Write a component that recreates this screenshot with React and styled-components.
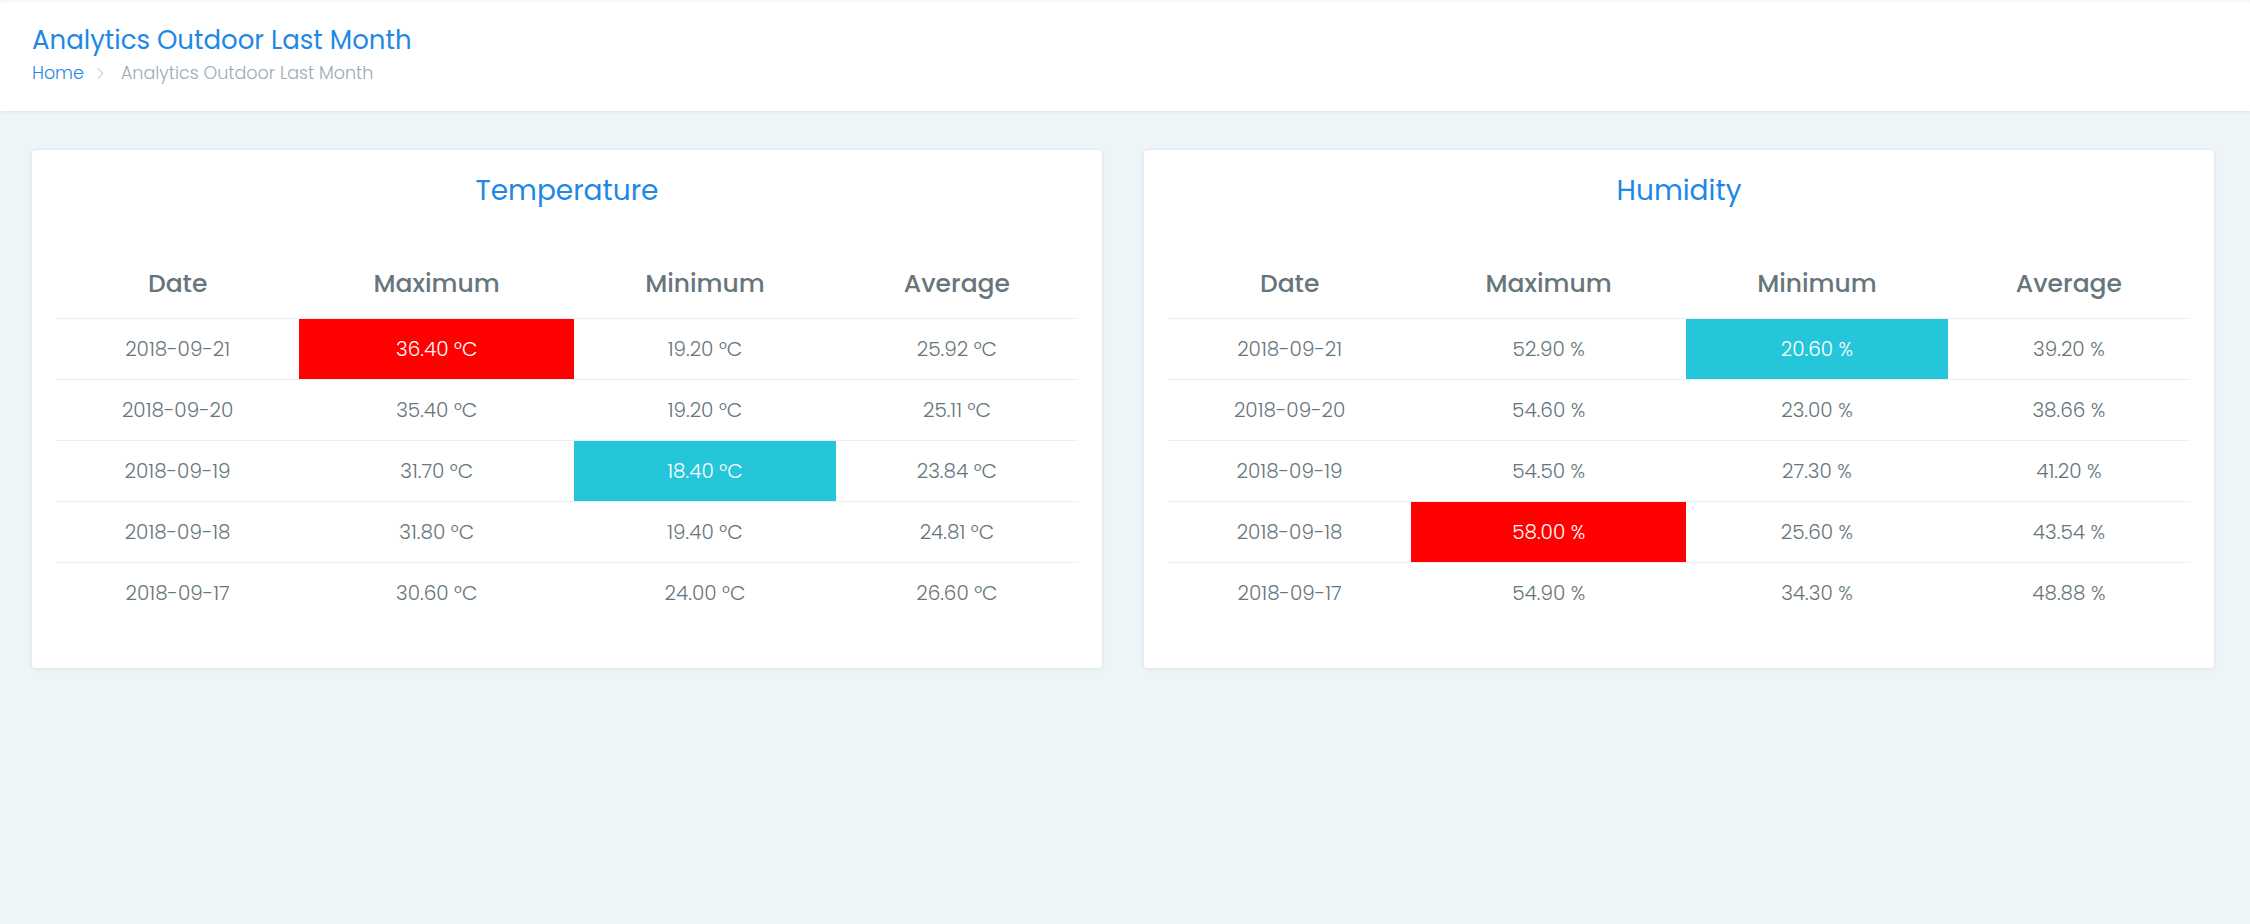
import React from 'react'
import styled, { createGlobalStyle } from 'styled-components'
import { ChevronRight } from 'lucide-react'

const GlobalStyle = createGlobalStyle`
  html, body {
    margin: 0;
    padding: 0;
  }
  body {
    background: #eef5f9;
    font-family: "Poppins", "Inter", "Noto Sans", sans-serif;
    color: #67757c;
    min-height: 100vh;
  }
`

const temperature = [
  { date: '2018-09-21', max: 36.4, min: 19.2, avg: 25.92 },
  { date: '2018-09-20', max: 35.4, min: 19.2, avg: 25.11 },
  { date: '2018-09-19', max: 31.7, min: 18.4, avg: 23.84 },
  { date: '2018-09-18', max: 31.8, min: 19.4, avg: 24.81 },
  { date: '2018-09-17', max: 30.6, min: 24.0, avg: 26.6 },
]

const humidity = [
  { date: '2018-09-21', max: 52.9, min: 20.6, avg: 39.2 },
  { date: '2018-09-20', max: 54.6, min: 23.0, avg: 38.66 },
  { date: '2018-09-19', max: 54.5, min: 27.3, avg: 41.2 },
  { date: '2018-09-18', max: 58.0, min: 25.6, avg: 43.54 },
  { date: '2018-09-17', max: 54.9, min: 34.3, avg: 48.88 },
]

function StatsCard({ title, rows, unit }) {
  const top = Math.max(...rows.map(r => r.max))
  const bottom = Math.min(...rows.map(r => r.min))
  const fmt = v => `${v.toFixed(2)} ${unit}`

  return (
    <Card>
      <CardTitle>{title}</CardTitle>
      <Table>
        <colgroup>
          <Col width="23.8%" />
          <Col width="26.9%" />
          <Col width="25.6%" />
          <Col width="23.7%" />
        </colgroup>
        <thead>
          <tr>
            <Th>Date</Th>
            <Th>Maximum</Th>
            <Th>Minimum</Th>
            <Th>Average</Th>
          </tr>
        </thead>
        <tbody>
          {rows.map(r => (
            <tr key={r.date}>
              <Td>{r.date}</Td>
              <Td tone={r.max === top ? 'hot' : null}>{fmt(r.max)}</Td>
              <Td tone={r.min === bottom ? 'cold' : null}>{fmt(r.min)}</Td>
              <Td>{fmt(r.avg)}</Td>
            </tr>
          ))}
        </tbody>
      </Table>
    </Card>
  )
}

export default function App() {
  return (
    <>
      <GlobalStyle />
      <PageTitles>
        <PageTitle>Analytics Outdoor Last Month</PageTitle>
        <Breadcrumb>
          <Crumb href="#">Home</Crumb>
          <Separator>
            <ChevronRight size={19} strokeWidth={1.1} />
          </Separator>
          <Current>Analytics Outdoor Last Month</Current>
        </Breadcrumb>
      </PageTitles>
      <Content>
        <StatsCard title="Temperature" rows={temperature} unit="°C" />
        <StatsCard title="Humidity" rows={humidity} unit="%" />
      </Content>
    </>
  )
}

const PageTitles = styled.header`
  background: #fff;
  padding: 25px 32px 25px;
  box-shadow: 1px 0 5px rgba(0, 0, 0, 0.1), inset 0 3px 3px -2px rgba(0, 0, 0, 0.06);
`
const PageTitle = styled.h3`
  margin: 0 0 4px;
  font-size: 26px;
  line-height: 31px;
  font-weight: 400;
  color: #1e88e5;
`
const Breadcrumb = styled.nav`
  display: flex;
  align-items: center;
  font-size: 17.5px;
  line-height: 26px;
  font-weight: 300;
`
const Crumb = styled.a`
  color: #1e88e5;
  text-decoration: none;
`
const Separator = styled.span`
  display: flex;
  align-items: center;
  margin: 0 11px 0 7px;
  color: #99abb4;
`
const Current = styled.span`
  color: #99abb4;
`
const Content = styled.main`
  display: grid;
  grid-template-columns: 1fr 1fr;
  gap: 40px;
  padding: 38px 35px 0 31px;
  align-items: start;
`
const Card = styled.section`
  background: #fff;
  border: 1px solid #e3e9ed;
  border-radius: 4px;
  box-shadow: 0 1px 4px rgba(0, 0, 0, 0.05);
  padding: 23px 24px 45px;
`
const CardTitle = styled.h3`
  margin: 0 0 44px;
  text-align: center;
  font-size: 28px;
  line-height: 35px;
  font-weight: 400;
  color: #1e88e5;
`
const Table = styled.table`
  width: 100%;
  border-collapse: collapse;
  table-layout: fixed;
`
const Col = styled.col`
  width: ${p => p.width};
`
const Th = styled.th`
  padding: 12px 12px 15px;
  font-size: 25px;
  line-height: 39px;
  font-weight: 500;
  color: #67757c;
  text-align: center;
`
const Td = styled.td`
  padding: 18px 12px;
  border-top: 1px solid #eceff1;
  font-size: 20px;
  line-height: 24px;
  font-weight: 300;
  text-align: center;
  color: ${p => (p.tone ? '#fff' : '#67757c')};
  background: ${p => (p.tone === 'hot' ? '#ff0000' : p.tone === 'cold' ? '#26c6da' : 'transparent')};
`
